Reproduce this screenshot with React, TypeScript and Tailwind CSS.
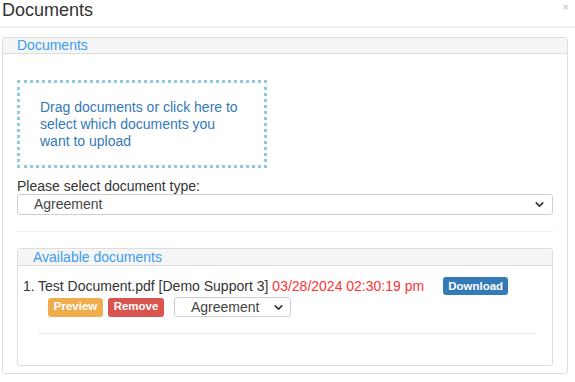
import { ChevronDown } from 'lucide-react';

function SelectBox({ value, className }: { value: string; className: string }) {
  return (
    <div
      className={`flex items-center justify-between border border-[#cfcfcf] rounded-[3px] bg-white text-[14px] text-[#444] ${className}`}
    >
      <span>{value}</span>
      <ChevronDown size={13} strokeWidth={3} className="text-[#333]" />
    </div>
  );
}

function Btn({ label, color, w }: { label: string; color: string; w: string }) {
  return (
    <span
      className={`flex h-[19px] items-center justify-center rounded-[3px] text-[11.5px] font-bold text-white ${color} ${w}`}
    >
      {label}
    </span>
  );
}

export default function App() {
  return (
    <div className="h-[382px] w-[575px] bg-white font-['Liberation_Sans',Arial,sans-serif] text-[#333]">
      {/* modal header */}
      <div className="flex h-[28px] items-start justify-between border-b-2 border-[#eeeeee] pl-[2px] pr-[6px]">
        <h1 className="text-[18px] leading-[20px] text-[#333]">Documents</h1>
        <span className="mt-[2px] text-[11px] leading-none text-[#bbb]">×</span>
      </div>

      <div className="px-[2px] pt-[9px]">
        <div className="w-[566px] rounded-[3px] border border-[#dddddd]">
          <div className="h-[16px] border-b border-[#dddddd] bg-[#f5f5f5] pl-[14px] text-[14px] leading-[15px] text-[#3d9cf0]">
            Documents
          </div>

          <div className="px-[14px] pb-[7px] pt-[26px]">
            <div className="h-[88px] w-[250px] border-[3px] border-dotted border-[#8ccbe0] pl-[20px] pr-[20px] pt-[16px] text-[14px] leading-[17px] text-[#3479b6]">
              Drag documents or click here to select which documents you want to upload
            </div>

            <div className="mt-[10px] text-[14px] leading-[16px] text-[#333]">Please select document type:</div>
            <SelectBox value="Agreement" className="h-[21px] w-[536px] pl-[16px] pr-[6px]" />

            <div className="mt-[16px] w-[536px] border-t border-[#eeeeee]" />

            <div className="mt-[16px] w-[536px] rounded-[3px] border border-[#dddddd]">
              <div className="h-[17px] border-b border-[#dddddd] bg-[#f5f5f5] pl-[15px] text-[14px] leading-[16px] text-[#3d9cf0]">
                Available documents
              </div>
              <div className="pb-[31px] pl-[5px] pt-[11px]">
                <div className="flex items-center text-[14px] leading-[18px]">
                  <span className="w-[15px]">1.</span>
                  <span className="text-[#333]">Test Document.pdf [Demo Support 3]</span>
                  <span className="ml-[4px] text-[#ff3333]">03/28/2024 02:30:19 pm</span>
                  <span className="ml-[19px] flex h-[18px] w-[65px] items-center justify-center rounded-[3px] bg-[#337ab7] text-[11.5px] font-bold text-white">
                    Download
                  </span>
                </div>
                <div className="ml-[25px] mt-[2px] flex items-center gap-[5px]">
                  <Btn label="Preview" color="bg-[#f0ad4e]" w="w-[55px]" />
                  <Btn label="Remove" color="bg-[#d9534f]" w="w-[56px]" />
                  <SelectBox value="Agreement" className="ml-[5px] h-[20px] w-[117px] pl-[16px] pr-[5px]" />
                </div>
                <div className="ml-[15px] mt-[16px] w-[499px] border-t border-[#eeeeee]" />
              </div>
            </div>
          </div>
        </div>
      </div>
    </div>
  );
}
